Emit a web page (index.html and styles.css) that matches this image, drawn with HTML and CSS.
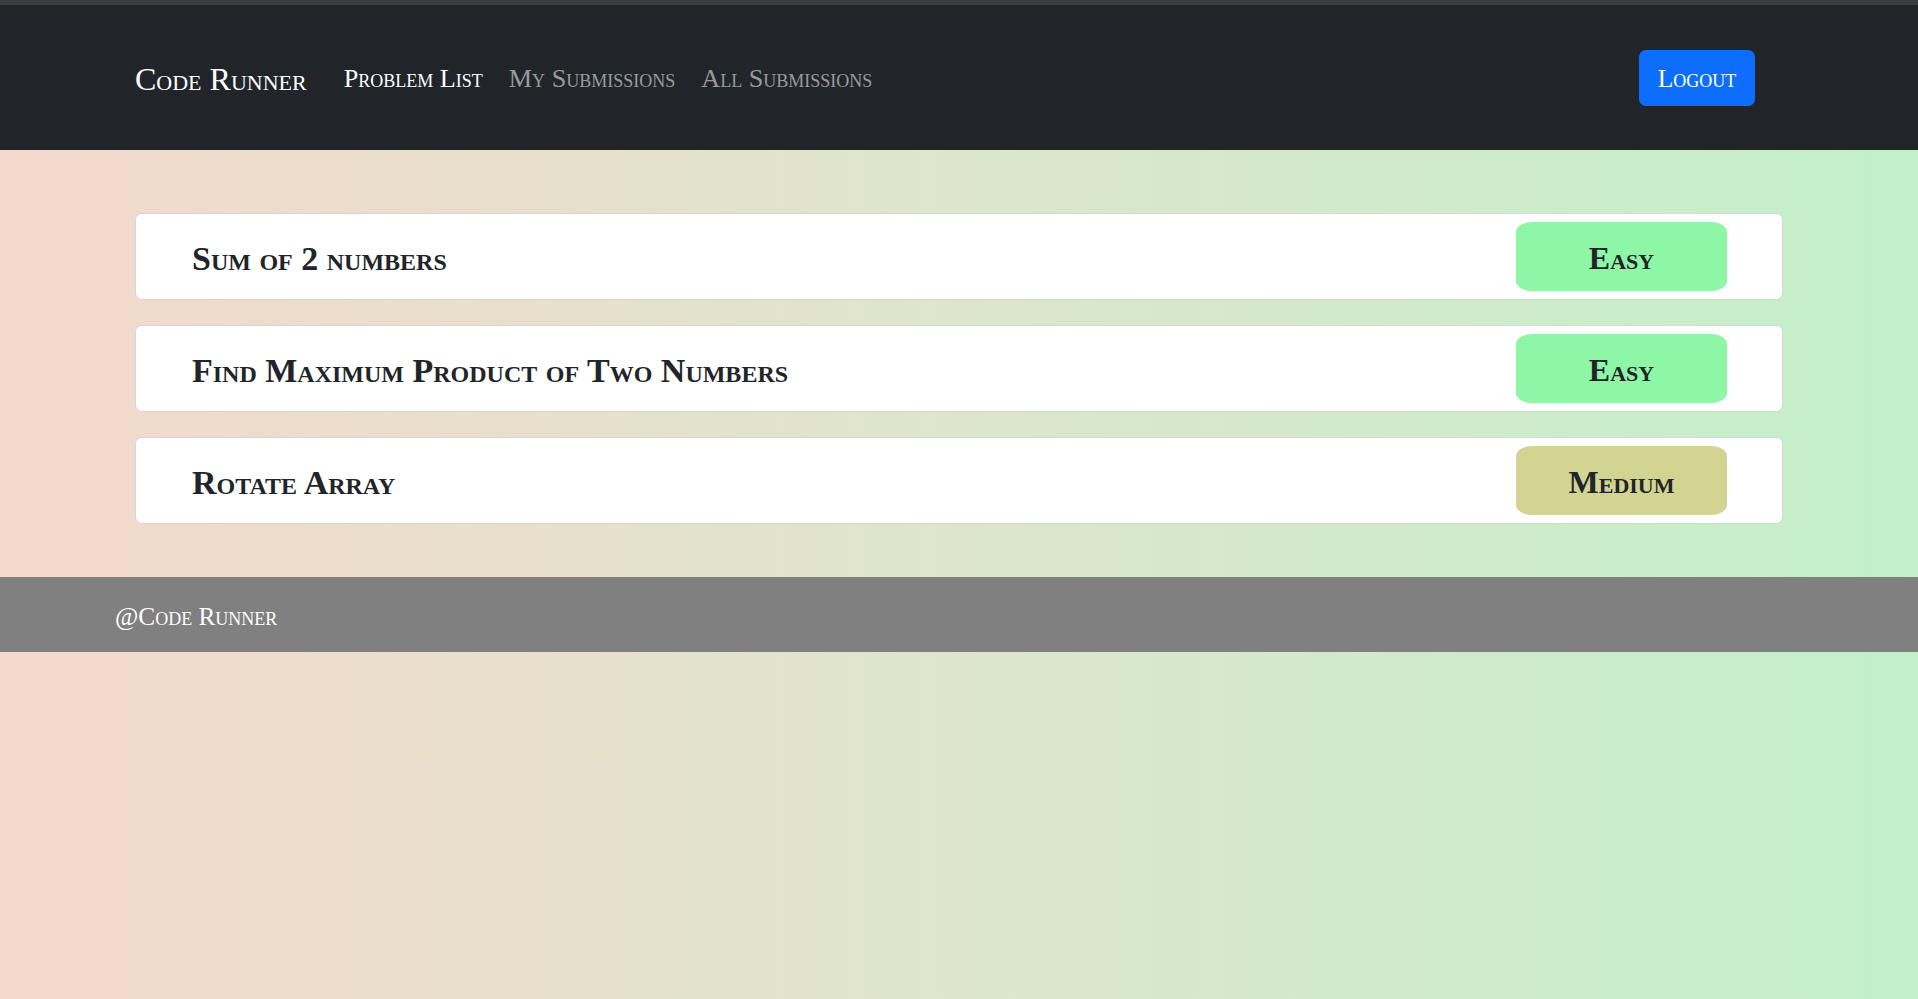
FILE: index.html
```html
<!DOCTYPE html>
<html lang="en">
<head>
<meta charset="utf-8">
<title>Code Runner</title>
<link rel="stylesheet" href="styles.css">
</head>
<body>
<div class="topstrip"></div>
<nav class="navbar">
  <a class="brand" href="#">Code Runner</a>
  <ul class="nav-links">
    <li><a class="nav-link active" href="#">Problem List</a></li>
    <li><a class="nav-link" href="#">My Submissions</a></li>
    <li><a class="nav-link" href="#">All Submissions</a></li>
  </ul>
  <button class="logout">Logout</button>
</nav>
<main class="problems">
  <div class="card">
    <h3 class="title">Sum of 2 numbers</h3>
    <span class="badge easy">Easy</span>
  </div>
  <div class="card">
    <h3 class="title">Find Maximum Product of Two Numbers</h3>
    <span class="badge easy">Easy</span>
  </div>
  <div class="card">
    <h3 class="title">Rotate Array</h3>
    <span class="badge medium">Medium</span>
  </div>
</main>
<footer class="footer">@Code Runner</footer>
</body>
</html>
```
FILE: styles.css
```css
html {
  min-height: 100%;
  background: linear-gradient(to right, #f5d9cc 0%, #dde6cb 50%, #c2f0c8 100%);
}
body {
  margin: 0;
  font-family: "Liberation Serif", "Times New Roman", serif;
  font-variant: small-caps;
  color: #212529;
}
.topstrip {
  height: 5px;
  background: #3d3d3d;
}
.navbar {
  height: 145px;
  background: #212529;
  display: flex;
  align-items: center;
  padding: 3px 163px 0 135px;
  box-sizing: border-box;
}
.brand {
  color: #fff;
  text-decoration: none;
  font-size: 32px;
  margin-right: 37px;
}
.nav-links {
  display: flex;
  gap: 26px;
  list-style: none;
  margin: 0;
  padding: 0;
}
.nav-link {
  color: rgba(255, 255, 255, 0.55);
  text-decoration: none;
  font-size: 26.2px;
}
.nav-link.active {
  color: #fff;
}
.logout {
  margin-left: auto;
  margin-top: -3px;
  width: 116px;
  height: 56px;
  background: #0d6efd;
  border: none;
  border-radius: 7px;
  color: #fff;
  font-family: inherit;
  font-variant: small-caps;
  font-size: 25.5px;
  padding: 3px 0 0;
}
.problems {
  padding: 63px 135px 53px;
  display: flex;
  flex-direction: column;
  gap: 25px;
}
.card {
  height: 87px;
  box-sizing: border-box;
  background: #fff;
  border: 1px solid #d6d6d6;
  border-radius: 7px;
  display: flex;
  align-items: center;
  justify-content: space-between;
  padding: 0 55px 0 56px;
}
.title {
  margin: 0;
  padding-top: 4px;
  font-size: 34px;
  font-weight: bold;
}
.badge {
  width: 211px;
  height: 69px;
  box-sizing: border-box;
  padding-top: 3px;
  display: flex;
  align-items: center;
  justify-content: center;
  border-radius: 16px / 10px;
  font-size: 32px;
  font-weight: bold;
}
.easy {
  background: #8df7a6;
}
.medium {
  background: #d3d392;
}
.footer {
  height: 75px;
  background: #808080;
  color: #fff;
  display: flex;
  align-items: center;
  padding: 3px 0 0 115px;
  box-sizing: border-box;
  font-size: 25.3px;
}
```
